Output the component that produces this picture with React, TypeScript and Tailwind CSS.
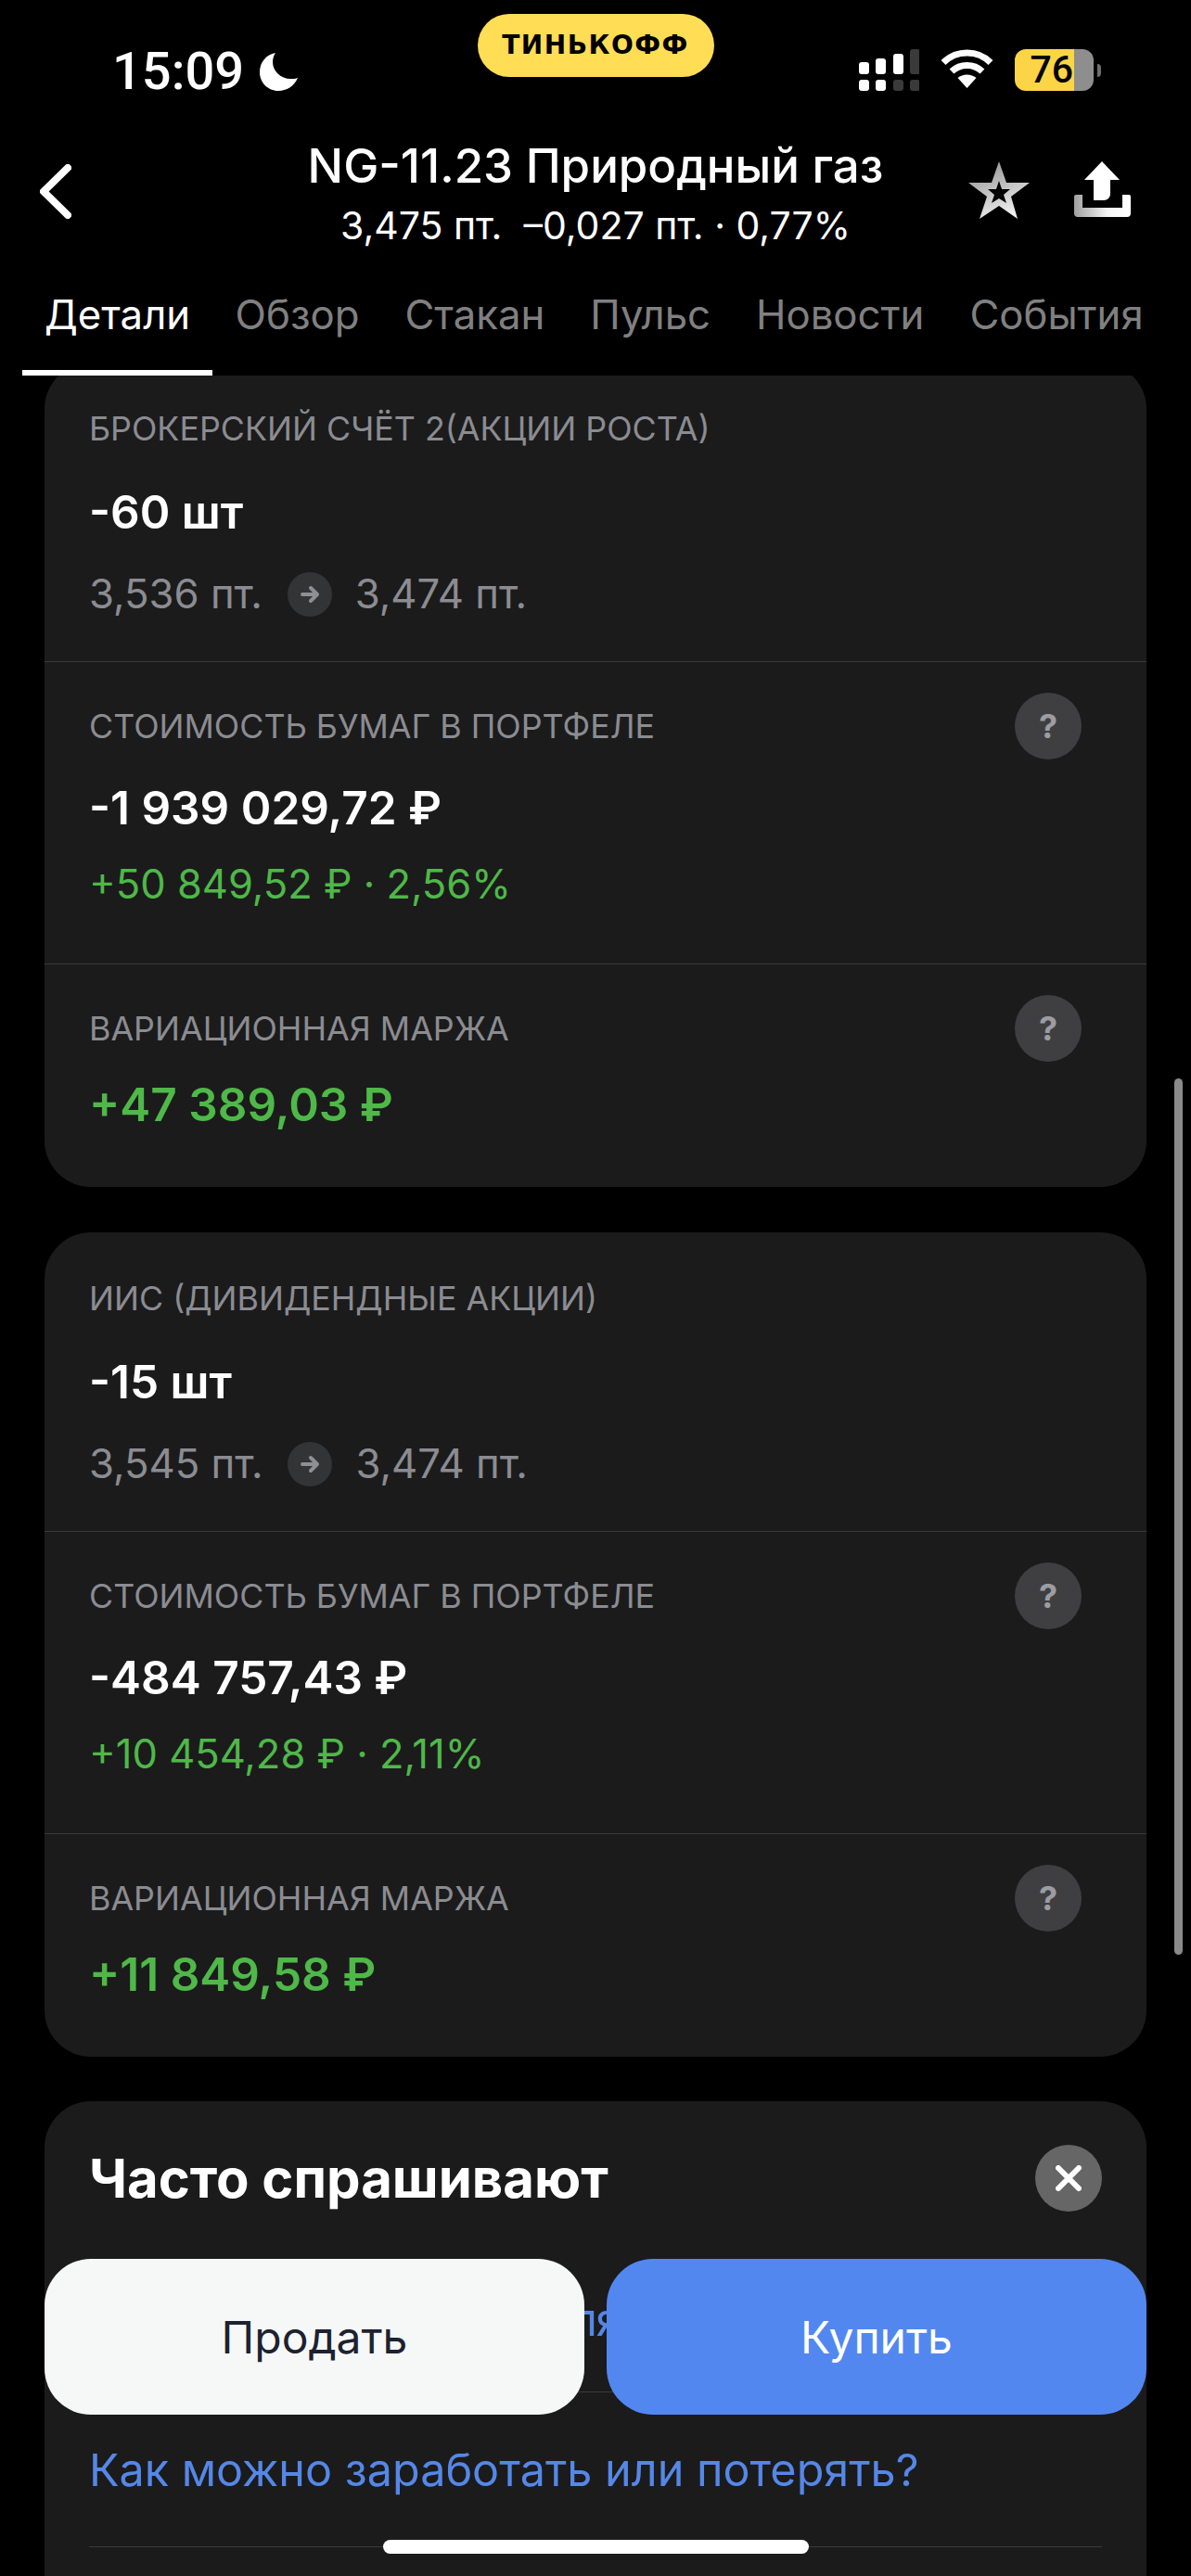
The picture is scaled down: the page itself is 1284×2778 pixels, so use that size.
import React from 'react';

const tabs = ['Детали', 'Обзор', 'Стакан', 'Пульс', 'Новости', 'События'];

function Moon() {
  return (
    <svg width="41" height="41" viewBox="0 0 41 41" className="mt-[5px]">
      <path fill="#fff" d="M17 0C7 2 0 10 0 21c0 11 9 20 20 20 9 0 17-5 21-14-2 1-5 1-8 1-10 0-19-8-19-18 0-4 1-7 3-10z" />
    </svg>
  );
}

function Signal() {
  const dim = '#3a3a3a';
  return (
    <svg width="65" height="45" viewBox="0 0 65 45">
      <rect x="0" y="14" width="11" height="13" rx="3" fill="#fff" />
      <rect x="18" y="10" width="11" height="17" rx="3" fill="#fff" />
      <rect x="37" y="5" width="11" height="22" rx="3" fill="#fff" />
      <rect x="55" y="0" width="11" height="27" rx="3" fill={dim} />
      <rect x="0" y="33" width="11" height="12" rx="3" fill="#fff" />
      <rect x="18" y="33" width="11" height="12" rx="3" fill="#fff" />
      <rect x="37" y="33" width="11" height="12" rx="3" fill={dim} />
      <rect x="55" y="33" width="11" height="12" rx="3" fill={dim} />
    </svg>
  );
}

function Wifi() {
  return (
    <svg width="57" height="42" viewBox="0 0 57 42">
      <path fill="none" stroke="#fff" strokeWidth="7" d="M3 14.5C9.500 8 18.500 4 28.500 4S47.500 8 54 14.500" />
      <path fill="none" stroke="#fff" strokeWidth="7" d="M12 24c4.500-4.200 10-6.500 16.500-6.500S40.500 19.800 45 24" />
      <path fill="#fff" d="M18.500 31c2.800-2.300 6.200-3.500 10-3.500s7.200 1.200 10 3.500L28.500 42z" />
    </svg>
  );
}

function Battery() {
  return (
    <div className="flex items-center">
      <div className="flex h-[45px] w-[85px]">
        <div className="flex w-[64px] items-center justify-end rounded-l-[12px] bg-[#fbd545] pr-px font-[Roboto,sans-serif] text-[41px] leading-none font-medium text-black">76</div>
        <div className="w-[21px] rounded-r-[12px] bg-[#8e8e8e]" />
      </div>
      <div className="ml-[4px] h-[14px] w-[4px] rounded-r-full bg-[#6e6e6e]" />
    </div>
  );
}

function Star() {
  return (
    <svg width="66" height="62" viewBox="0 0 66 62">
      <defs>
        <linearGradient id="starFill" x1="0.2" y1="0.1" x2="0.6" y2="1">
          <stop offset="0" stopColor="#9a9a9a" />
          <stop offset="1" stopColor="#f2f2f2" />
        </linearGradient>
      </defs>
      <path
        fill="url(#starFill)"
        fillRule="evenodd"
        d="M33 0l8 23h25L46 38l7 24-20-14-21 14 8-24L0 23h25zM33 21l-3 9h-9l7 6-3 9 8-5 8 5-3-9 7-6h-9z"
      />
    </svg>
  );
}

function Share() {
  return (
    <svg width="61" height="60" viewBox="0 0 61 60">
      <defs>
        <linearGradient id="trayFill" x1="0" y1="0.5" x2="1" y2="0.5">
          <stop offset="0" stopColor="#a0a0a0" />
          <stop offset="0.6" stopColor="#f5f5f5" />
          <stop offset="1" stopColor="#ffffff" />
        </linearGradient>
      </defs>
      <path fill="#fff" d="M30 0l19 20H39v15c0 4-3 7-7 7H21V20H11z" />
      <path fill="url(#trayFill)" d="M0 38a2 2 0 0 1 2-2h7v14h43V36h7a2 2 0 0 1 2 2v18a4 4 0 0 1-4 4H4a4 4 0 0 1-4-4z" />
    </svg>
  );
}

function Help() {
  return (
    <div className="flex h-[72px] w-[72px] shrink-0 items-center justify-center rounded-full bg-[#3f3f41] text-[36px] leading-none font-bold text-[#9c9ca1]">?</div>
  );
}

function Label({ text, help }: { text: string; help?: boolean }) {
  return (
    <div className="relative pr-[78px] pl-[48px] text-[35.800px] leading-[40px] text-[#8b8c91]">
      {text}
      {help && (
        <div className="absolute top-[-16px] right-[70px]">
          <Help />
        </div>
      )}
    </div>
  );
}

function PositionCard(props: {
  account: string;
  qty: string;
  from: string;
  to: string;
  value: string;
  change: string;
  margin: string;
  className?: string;
}) {
  return (
    <section className={'ml-[48px] mr-[48px] shrink-0 rounded-[50px] bg-[#1b1b1c] ' + (props.className ?? '')}>
      <div className="pt-[51px] pb-[44px]">
        <Label text={props.account} />
        <div className="mt-[40px] pl-[48px] text-[49.500px] leading-[60px] font-semibold text-white">{props.qty}</div>
        <div className="mt-[31px] flex h-[56px] items-center pl-[48px] text-[43.700px] leading-[56px] text-[#8b8c91]">
          <span>{props.from}</span>
          <span className="mr-[25px] ml-[27px] flex h-[48px] w-[48px] items-center justify-center rounded-full bg-[#333436]">
            <svg width="22" height="22" viewBox="0 0 22 22" fill="none" stroke="#8e8f93" strokeWidth="4" strokeLinecap="round" strokeLinejoin="round">
              <path d="M3 11h16M12 4l7 7-7 7" />
            </svg>
          </span>
          <span>{props.to}</span>
        </div>
      </div>
      <div className="h-px bg-[#3a3a3c]" />
      <div className="pt-[49px] pb-[58px]">
        <Label text="СТОИМОСТЬ БУМАГ В ПОРТФЕЛЕ" help />
        <div className="mt-[38px] pl-[48px] text-[49.500px] leading-[60px] font-semibold text-white">{props.value}</div>
        <div className="mt-[24px] pl-[48px] text-[43.500px] leading-[56px] text-[#4fb848]">{props.change}</div>
      </div>
      <div className="h-px bg-[#3a3a3c]" />
      <div className="pt-[49px] pb-[59px]">
        <Label text="ВАРИАЦИОННАЯ МАРЖА" help />
        <div className="mt-[32px] pl-[48px] text-[49.500px] leading-[60px] font-semibold text-[#4fb848]">{props.margin}</div>
      </div>
    </section>
  );
}

export default function App() {
  return (
    <div className="relative flex h-[2778px] w-[1284px] flex-col overflow-hidden bg-black font-[Inter,sans-serif] text-white">
      {/* Status bar */}
      <header className="grid h-[149px] shrink-0 grid-cols-[1fr_255px_1fr]">
        <div className="flex items-start gap-[17px] pt-[52px] pl-[121px]">
          <span className="font-[Roboto,sans-serif] text-[56px] leading-[50px] font-medium">15:09</span>
          <Moon />
        </div>
        <div className="pt-[15px]">
          <div className="flex h-[68px] items-center justify-center rounded-[34px] bg-[#ffdd55] font-['DejaVu_Sans',sans-serif] text-[28px] font-bold tracking-[1.500px] text-black">
            ТИНЬКОФФ
          </div>
        </div>
        <div className="flex items-start justify-end gap-[23px] pt-[53px] pr-[97px]">
          <Signal />
          <Wifi />
          <Battery />
        </div>
      </header>

      {/* Title */}
      <nav className="grid h-[151px] shrink-0 grid-cols-[1fr_auto_1fr]">
        <div className="pt-[28px] pl-[43px]">
          <svg width="34" height="59" viewBox="0 0 34 59" fill="none" stroke="#fff" strokeWidth="8" strokeLinecap="round" strokeLinejoin="round">
            <path d="M30 4L4 29.500 30 55" />
          </svg>
        </div>
        <div className="flex flex-col items-center">
          <div className="text-[51px] leading-[60px] font-medium">NG-11.23 Природный газ</div>
          <div className="mt-[9px] text-[41px] leading-[50px] whitespace-pre">3,475 пт.  –0,027 пт. · 0,77%</div>
        </div>
        <div className="flex items-start justify-end gap-[48px] pt-[25px] pr-[65px]">
          <Star />
          <Share />
        </div>
      </nav>

      {/* Tabs */}
      <div className="flex h-[105px] shrink-0 pl-[24px] text-[43.700px] leading-[60px] text-[#808080]">
        {tabs.map((tab, i) => (
          <div key={tab} className={i === 0 ? 'h-[105px] border-b-[6px] border-white px-[24px] pt-[10px] text-white' : 'px-[24.500px] pt-[10px]'}>
            {tab}
          </div>
        ))}
      </div>

      {/* Scroll content */}
      <main className="flex min-h-0 flex-1 flex-col gap-[49px] overflow-hidden">
        <PositionCard
          className="-mt-[14px]"
          account="БРОКЕРСКИЙ СЧЁТ 2(АКЦИИ РОСТА)"
          qty="-60 шт"
          from="3,536 пт."
          to="3,474 пт."
          value="-1 939 029,72 ₽"
          change="+50 849,52 ₽ · 2,56%"
          margin="+47 389,03 ₽"
        />
        <PositionCard
          account="ИИС (ДИВИДЕНДНЫЕ АКЦИИ)"
          qty="-15 шт"
          from="3,545 пт."
          to="3,474 пт."
          value="-484 757,43 ₽"
          change="+10 454,28 ₽ · 2,11%"
          margin="+11 849,58 ₽"
        />
        <section className="mr-[48px] ml-[48px] -mt-px shrink-0 rounded-t-[50px] bg-[#1b1b1c] px-[48px] pt-[47px] pb-[60px]">
          <div className="flex items-center justify-between">
            <h2 className="text-[58px] leading-[70px] font-bold">Часто спрашивают</h2>
            <span className="flex h-[72px] w-[72px] items-center justify-center rounded-full bg-[#666666]">
              <svg width="28" height="28" viewBox="0 0 28 28" fill="none" stroke="#fff" strokeWidth="6" strokeLinecap="round">
                <path d="M3 3l22 22M25 3L3 25" />
              </svg>
            </span>
          </div>
          <div className="mt-[87px] text-[48.500px] leading-[60px] tracking-[-1.300px] whitespace-nowrap text-[#5587e6]">Что такое фьючерс и для чего</div>
          <div className="mt-[47px] h-px bg-[#3a3a3c]" />
          <div className="mt-[54px] text-[48.500px] leading-[60px] text-[#5587e6]">Как можно заработать или потерять?</div>
          <div className="mt-[52px] h-px bg-[#3a3a3c]" />
        </section>
      </main>

      {/* Sticky buttons */}
      <div className="absolute right-[48px] bottom-[174px] left-[48px] flex gap-[24px]">
        <button className="flex h-[168px] flex-1 items-center justify-center rounded-[50px] bg-[#f6f8f8] pt-[2px] text-[48px] text-[#1c2230]">Продать</button>
        <button className="flex h-[168px] flex-1 items-center justify-center rounded-[50px] bg-[#5387f0] pt-[2px] text-[48px] text-white">Купить</button>
      </div>

      {/* Scrollbar */}
      <div className="absolute top-[1163px] right-[9px] h-[945px] w-[9px] rounded-full bg-[#8a8a8a]" />

      {/* Home indicator */}
      <div className="absolute bottom-[24px] left-[413px] h-[15px] w-[459px] rounded-full bg-white" />
    </div>
  );
}
